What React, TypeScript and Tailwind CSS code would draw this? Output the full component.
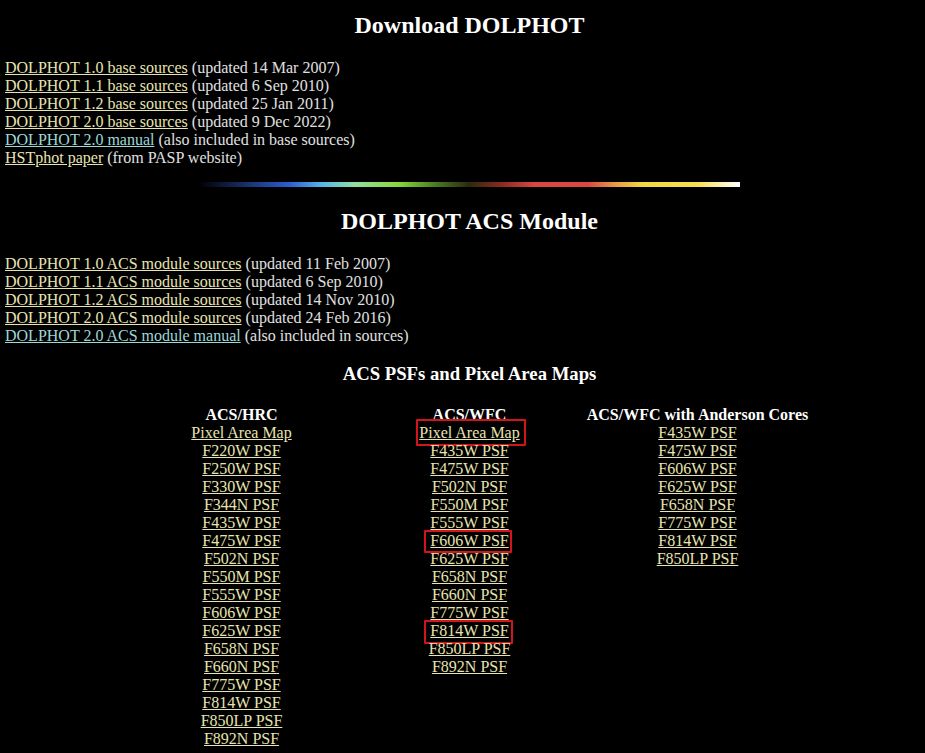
import React from "react";

const LINK = "text-[#e8e4b0] underline";
const LINK2 = "text-[#9cd8d8] underline";

function Row({ href, label, note, cyan }: { href?: string; label: string; note: string; cyan?: boolean }) {
  return (
    <div className="leading-[18px] h-[18px] whitespace-nowrap">
      <a href={href ?? "#"} className={cyan ? LINK2 : LINK}>{label}</a>{" "}
      <span>{note}</span>
    </div>
  );
}

function Cell({ label, box }: { label: string; box?: string }) {
  return (
    <div className="leading-[18px] h-[18px] text-center whitespace-nowrap">
      <span className="relative inline-block">
        <a href="#" className={LINK}>{label}</a>
        {box && <span className={"absolute border-2 border-[#d4141a] rounded-[1px] " + box} />}
      </span>
    </div>
  );
}

const hrc = [
  "Pixel Area Map", "F220W PSF", "F250W PSF", "F330W PSF", "F344N PSF", "F435W PSF", "F475W PSF",
  "F502N PSF", "F550M PSF", "F555W PSF", "F606W PSF", "F625W PSF", "F658N PSF", "F660N PSF",
  "F775W PSF", "F814W PSF", "F850LP PSF", "F892N PSF",
];
const wfc = [
  "Pixel Area Map", "F435W PSF", "F475W PSF", "F502N PSF", "F550M PSF", "F555W PSF", "F606W PSF",
  "F625W PSF", "F658N PSF", "F660N PSF", "F775W PSF", "F814W PSF", "F850LP PSF", "F892N PSF",
];
const boxes: Record<string, string> = {
  "Pixel Area Map": "-left-[3px] -right-[6px] -top-[5px] -bottom-[4px]",
  "F606W PSF": "-left-[6px] -right-[3px] -top-[2px] -bottom-[3px]",
  "F814W PSF": "-left-[6px] -right-[4px] -top-[2px] -bottom-[4px]",
};
const and = ["F435W PSF", "F475W PSF", "F606W PSF", "F625W PSF", "F658N PSF", "F775W PSF", "F814W PSF", "F850LP PSF"];

export default function App() {
  return (
    <div className="min-h-[753px] w-full bg-black text-[#e0e0e0] overflow-hidden font-['Liberation_Serif',serif] text-[16px]">
      <div className="ml-[5px] w-[929px] pt-[11px] pb-[20px]">
        <h1 className="text-center text-white font-bold text-[24px] leading-[28px] h-[28px]">Download DOLPHOT</h1>
        <div className="mt-[20px]">
          <Row label="DOLPHOT 1.0 base sources" note="(updated 14 Mar 2007)" />
          <Row label="DOLPHOT 1.1 base sources" note="(updated 6 Sep 2010)" />
          <Row label="DOLPHOT 1.2 base sources" note="(updated 25 Jan 2011)" />
          <Row label="DOLPHOT 2.0 base sources" note="(updated 9 Dec 2022)" />
          <Row label="DOLPHOT 2.0 manual" note="(also included in base sources)" cyan />
          <Row label="HSTphot paper" note="(from PASP website)" />
        </div>
        <div className="mt-[15px] flex justify-center">
          <svg width="542" height="5" className="block ml-[-1px]">
            <defs>
              <linearGradient id="rb" x1="0" x2="1" y1="0" y2="0">
                <stop offset="0" stopColor="#000000" />
                <stop offset="0.08" stopColor="#182a60" />
                <stop offset="0.17" stopColor="#2a60d0" />
                <stop offset="0.23" stopColor="#58b8e8" />
                <stop offset="0.29" stopColor="#8ee0a0" />
                <stop offset="0.37" stopColor="#88d83a" />
                <stop offset="0.44" stopColor="#4a7820" />
                <stop offset="0.5" stopColor="#2a2a10" />
                <stop offset="0.56" stopColor="#8a2a20" />
                <stop offset="0.62" stopColor="#d84840" />
                <stop offset="0.72" stopColor="#d84a40" />
                <stop offset="0.77" stopColor="#e89a48" />
                <stop offset="0.82" stopColor="#f2d840" />
                <stop offset="0.92" stopColor="#f4e050" />
                <stop offset="1" stopColor="#ffffff" />
              </linearGradient>
            </defs>
            <rect x="0" y="0" width="542" height="5" fill="url(#rb)" />
          </svg>
        </div>
        <h1 className="mt-[20px] text-center text-white font-bold text-[24px] leading-[28px] h-[28px]">DOLPHOT ACS Module</h1>
        <div className="mt-[20px]">
          <Row label="DOLPHOT 1.0 ACS module sources" note="(updated 11 Feb 2007)" />
          <Row label="DOLPHOT 1.1 ACS module sources" note="(updated 6 Sep 2010)" />
          <Row label="DOLPHOT 1.2 ACS module sources" note="(updated 14 Nov 2010)" />
          <Row label="DOLPHOT 2.0 ACS module sources" note="(updated 24 Feb 2016)" />
          <Row label="DOLPHOT 2.0 ACS module manual" note="(also included in sources)" cyan />
        </div>
        <h3 className="mt-[18px] text-center text-white font-bold text-[18.72px] leading-[22px] h-[22px]">ACS PSFs and Pixel Area Maps</h3>
        <div className="mt-[21px] mx-auto w-[684px] grid grid-cols-3 items-start">
          <div>
            <div className="leading-[18px] h-[18px] text-center font-bold text-white">ACS/HRC</div>
            {hrc.map((l) => <Cell key={l} label={l} />)}
          </div>
          <div>
            <div className="leading-[18px] h-[18px] text-center font-bold text-white">ACS/WFC</div>
            {wfc.map((l) => <Cell key={l} label={l} box={boxes[l]} />)}
          </div>
          <div>
            <div className="leading-[18px] h-[18px] text-center font-bold text-white whitespace-nowrap">ACS/WFC with Anderson Cores</div>
            {and.map((l) => <Cell key={l} label={l} />)}
          </div>
        </div>
      </div>
    </div>
  );
}
